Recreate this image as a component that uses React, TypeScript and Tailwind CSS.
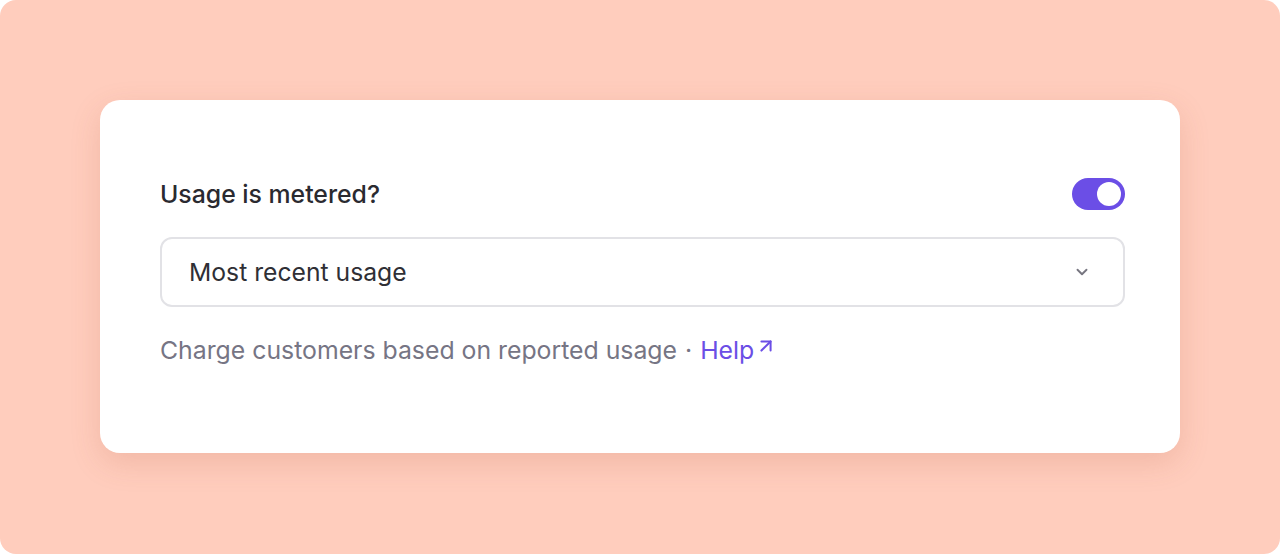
import { ChevronDown, ArrowUpRight } from 'lucide-react'

export default function App() {
  return (
    <div className="bg-white w-[1280px] h-[554px]">
      <div
        className="w-full h-full rounded-[16px] bg-[#ffcdbd] px-[100px] pt-[100px]"
        style={{ fontFamily: 'Inter, "Noto Sans", sans-serif' }}
      >
        <div className="h-[353px] rounded-[20px] bg-white pl-[60px] pr-[55px] pt-[76px] shadow-[0_10px_30px_rgba(180,90,60,0.18)]">
          <div className="flex items-center justify-between h-[36px]">
            <h2 className="text-[24.8px] font-medium text-[#2a2a30] leading-[36px]">Usage is metered?</h2>
            <button className="relative w-[53px] h-[32px] rounded-full bg-[#6b4ee6]">
              <span className="absolute right-[4px] top-[4px] w-[24px] h-[24px] rounded-full bg-white" />
            </button>
          </div>
          <div className="mt-[25px] flex items-center justify-between h-[70px] rounded-[12px] border-2 border-[#e2e2e6] pl-[27px] pr-[32px]">
            <span className="text-[24.7px] leading-[30px] text-[#2f2f35]">Most recent usage</span>
            <ChevronDown size={18} strokeWidth={2.5} className="text-[#777680]" />
          </div>
          <p className="mt-[28px] text-[24.8px] leading-[30px] text-[#767584] flex items-center">
            Charge customers based on reported usage
            <span className="mx-[8px]">·</span>
            <a className="text-[#6b4ee6] flex items-center">
              Help
              <ArrowUpRight size={22} strokeWidth={2.2} className="ml-[1px] -mt-[8px]" />
            </a>
          </p>
        </div>
      </div>
    </div>
  )
}
